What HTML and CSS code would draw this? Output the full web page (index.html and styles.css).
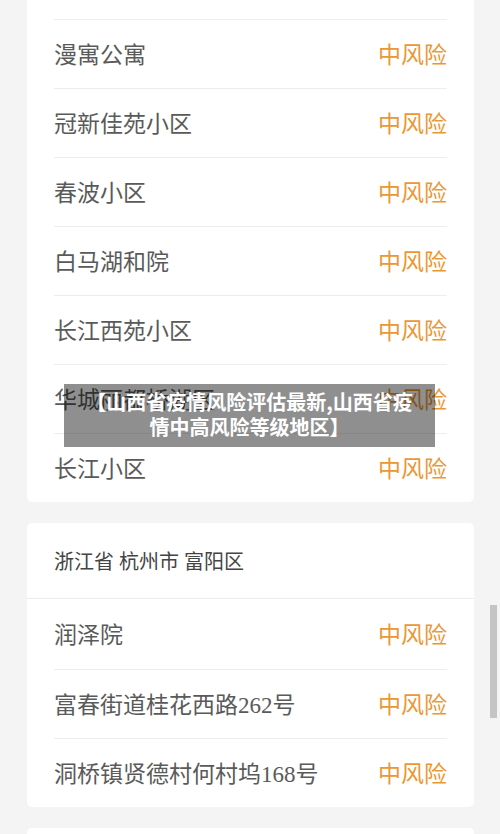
FILE: index.html
```html
<!DOCTYPE html>
<html lang="zh">
<head>
<meta charset="utf-8">
<title>山西省疫情风险评估</title>
<link rel="stylesheet" href="styles.css">
</head>
<body>
<div class="page">
  <div class="card card-first">
    <div class="row"><span class="name">恒大御景</span><span class="risk">中风险</span></div>
    <div class="row"><span class="name">漫寓公寓</span><span class="risk">中风险</span></div>
    <div class="row"><span class="name">冠新佳苑小区</span><span class="risk">中风险</span></div>
    <div class="row"><span class="name">春波小区</span><span class="risk">中风险</span></div>
    <div class="row"><span class="name">白马湖和院</span><span class="risk">中风险</span></div>
    <div class="row"><span class="name">长江西苑小区</span><span class="risk">中风险</span></div>
    <div class="row"><span class="name">华城丽都桥湖区</span><span class="risk">中风险</span></div>
    <div class="row"><span class="name">长江小区</span><span class="risk">中风险</span></div>
  </div>
  <div class="card">
    <div class="card-head">浙江省 杭州市 富阳区</div>
    <div class="row row-tall"><span class="name">润泽院</span><span class="risk">中风险</span></div>
    <div class="row"><span class="name">富春街道桂花西路262号</span><span class="risk">中风险</span></div>
    <div class="row"><span class="name">洞桥镇贤德村何村坞168号</span><span class="risk">中风险</span></div>
  </div>
  <div class="card card-next"></div>
</div>
<div class="caption">【山西省疫情风险评估最新,山西省疫情中高风险等级地区】</div>
<div class="scrollbar"></div>
</body>
</html>
```
FILE: styles.css
```css
html, body {
  margin: 0;
  padding: 0;
}
body {
  background: #f4f4f4;
  width: 500px;
  height: 834px;
  overflow: hidden;
  position: relative;
  font-family: "Liberation Serif", "Noto Sans CJK SC", serif;
}
.page {
  display: flex;
  flex-direction: column;
  gap: 21px;
  padding: 0 26px 0 27px;
  margin-top: -50px;
}
.card {
  background: #ffffff;
  border-radius: 5px;
}
.card-next {
  height: 80px;
}
.row {
  box-sizing: border-box;
  margin: 0 27px;
  height: 69px;
  padding-bottom: 3px;
  border-top: 1px solid #ededed;
  display: flex;
  align-items: center;
  justify-content: space-between;
  font-size: 23px;
}
.row:first-child {
  border-top: none;
}
.card-head + .row {
  border-top: none;
}
.row-tall {
  height: 70px;
}
.name {
  color: #5a5a5a;
}
.risk {
  color: #eb9733;
  font-family: "Noto Sans CJK SC", sans-serif;
}
.card-head {
  height: 75px;
  border-bottom: 1px solid #ededed;
  display: flex;
  align-items: center;
  padding-left: 27px;
  font-size: 20px;
  color: #444;
}
.caption {
  position: absolute;
  left: 64px;
  top: 384px;
  width: 371px;
  height: 63px;
  box-sizing: border-box;
  padding: 5px 16px 0;
  background: rgba(0, 0, 0, 0.44);
  color: #ffffff;
  font-family: "Noto Sans CJK SC", sans-serif;
  font-weight: 700;
  font-size: 20px;
  line-height: 25px;
  text-align: center;
}
.scrollbar {
  position: absolute;
  left: 490px;
  top: 605px;
  width: 7px;
  height: 113px;
  background: #c4c4c4;
}
```
